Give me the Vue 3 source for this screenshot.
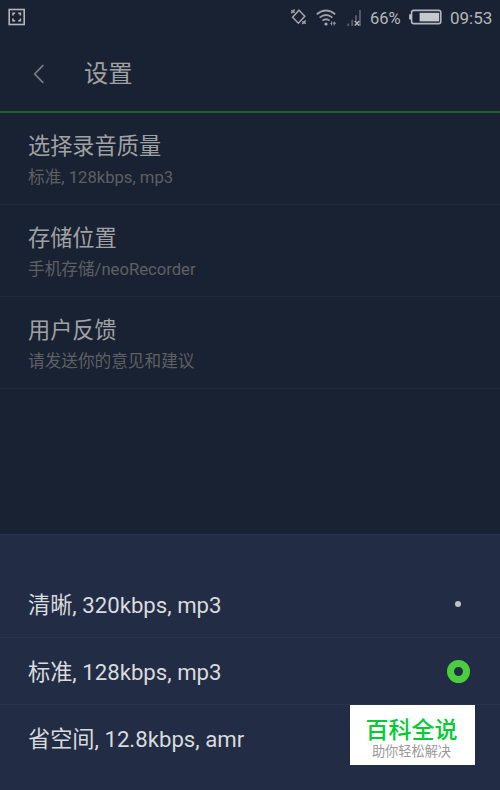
<template>
  <div class="screen">
    <div class="status-bar">
      <svg class="shot-icon" width="18" height="18" viewBox="0 0 18 18">
        <rect x="1.2" y="1.5" width="15" height="15" />
        <path d="M5 7.5V5.3h2.2M10.2 5.3h2.2v2.2M12.4 10.5v2.2h-2.2M7.2 12.7H5v-2.2" />
      </svg>

      <div class="status-right">
        <svg class="rotate-icon" width="17" height="18" viewBox="0 0 17 18">
          <path d="M9 2.2L14.8 8.2L8.4 15.2L2.6 9.2Z" />
          <path d="M1.2 5.2L4.7 1.5M1.2 2.4L4.7 4.6M12.2 16L15.7 12.4M12.4 13.4L15.7 15.6" />
        </svg>
        <svg class="wifi-icon" width="21" height="18" viewBox="0 0 21 18">
          <path d="M.8 5.2Q10 -2.2 19.2 5.2M3.6 8.6Q10 3.4 16.4 8.6M6.4 11.6Q10 8.8 13.6 11.6" />
          <circle cx="10" cy="15" r="1.6" />
          <path class="thin" d="M15.7 12.4v4M14.3 14.4h1.4M18.2 12.6v3.8M16.9 14.2h3" />
        </svg>
        <svg class="signal-icon" width="15" height="18" viewBox="0 0 15 18">
          <path class="dim" d="M1.2 14.6v2.4M5.2 10.8v6.2M9 6.2v5.6M13 1v16" />
          <path d="M7.8 12l4.4 4.6M12.2 12L7.8 16.6" />
        </svg>
        <span class="percent">66%</span>
        <svg class="battery-icon" width="34" height="16" viewBox="0 0 34 16">
          <rect class="shell" x="2.6" y="1.4" width="29.2" height="13.2" rx="2.2" />
          <rect class="fill" x="10.6" y="3.8" width="19.6" height="8.6" />
          <rect class="fill" x="0.2" y="5.3" width="1.8" height="5.2" />
        </svg>
        <span class="clock">09:53</span>
      </div>
    </div>

    <div class="header">
      <svg class="back-icon" width="12" height="20" viewBox="0 0 12 20">
        <path d="M10.3 1.2L1.7 10L10.3 18.8" />
      </svg>
      <h1>设置</h1>
    </div>

    <ul class="settings">
      <li v-for="item in settings" :key="item.title">
        <div class="title">{{ item.title }}</div>
        <div class="desc">{{ item.desc }}</div>
      </li>
    </ul>

    <div class="sheet">
      <div
        v-for="(option, index) in options"
        :key="option"
        class="option"
        @click="selected = index"
      >
        <span>{{ option }}</span>
        <i class="radio" :class="{ active: selected === index }"></i>
      </div>
    </div>

    <div class="badge">
      <strong>百科全说</strong>
      <span>助你轻松解决</span>
    </div>
  </div>
</template>

<script setup>
import { ref } from 'vue'

const settings = [
  { title: '选择录音质量', desc: '标准, 128kbps, mp3' },
  { title: '存储位置', desc: '手机存储/neoRecorder' },
  { title: '用户反馈', desc: '请发送你的意见和建议' }
]

const options = ['清晰, 320kbps, mp3', '标准, 128kbps, mp3', '省空间, 12.8kbps, amr']
const selected = ref(1)
</script>

<style>
body {
  background: #192232;
}
</style>

<style scoped>
.screen {
  position: relative;
  display: flex;
  flex-direction: column;
  width: 500px;
  height: 790px;
  overflow: hidden;
  background: #192232;
  font-family: Roboto, "Noto Sans CJK SC", sans-serif;
}

svg {
  display: block;
  fill: none;
  flex-shrink: 0;
}

/* status bar */
.status-bar {
  display: flex;
  justify-content: space-between;
  height: 36px;
  padding: 0 8px;
  color: #b3b7bd;
}

.shot-icon {
  margin-top: 8px;
  stroke: #b3b7bd;
  stroke-width: 1.6;
}

.status-right {
  display: flex;
  align-items: center;
  font-size: 17px;
  line-height: 37px;
}

.rotate-icon {
  margin: -2px 9px 0 0;
  stroke: #a0a5ad;
  stroke-width: 1.5;
}

.wifi-icon {
  margin: -1px 10px 0 0;
  stroke: #9ca1aa;
  stroke-width: 1.8;
}

.wifi-icon circle {
  fill: #a8acb4;
  stroke: none;
}

.wifi-icon .thin {
  stroke-width: 1;
}

.signal-icon {
  margin: -1px 8px 0 0;
  stroke: #b3b7bd;
  stroke-width: 1.5;
}

.signal-icon .dim {
  stroke: #59606c;
  stroke-width: 1.8;
}

.percent {
  width: 31px;
  font-size: 16.5px;
}

.battery-icon {
  width: 34px;
  margin: -2px 7px 0 8px;
}

.clock {
  width: 42px;
}

.shell {
  stroke: #b3b7bd;
  stroke-width: 1.6;
}

.fill {
  fill: #c6c9cd;
}

/* header */
.header {
  display: flex;
  align-items: center;
  height: 75px;
  padding-left: 33px;
  border-bottom: 2px solid #24602f;
}

.back-icon {
  stroke: #797d84;
  stroke-width: 1.7;
}

h1 {
  margin: 0 0 4px 39px;
  font-size: 24.3px;
  font-weight: 400;
  color: #a0a1a4;
}

/* settings */
.settings {
  margin: 0;
  padding: 0;
  list-style: none;
}

.settings li {
  box-sizing: border-box;
  height: 92px;
  padding: 16px 28px 0;
  border-bottom: 1px solid #202a39;
}

.title {
  height: 34px;
  line-height: 34px;
  font-size: 22.2px;
  color: #a0a1a4;
}

.desc {
  height: 26px;
  line-height: 29px;
  font-size: 16.65px;
  color: #5e6063;
}

/* bottom sheet */
.sheet {
  height: 219px;
  margin-top: auto;
  padding-top: 36px;
  border-top: 1px solid #263449;
  background: #222d45;
}

.option {
  box-sizing: border-box;
  display: flex;
  align-items: center;
  justify-content: space-between;
  height: 67px;
  padding: 0 30px 0 28px;
  border-bottom: 1px solid #28344a;
  font-size: 22.2px;
  color: #d9dbdd;
  cursor: pointer;
}

.option span {
  padding-bottom: 3px;
}

.option:last-child {
  border-bottom: none;
}

.radio {
  box-sizing: border-box;
  width: 6px;
  height: 6px;
  margin-right: 9px;
  border-radius: 50%;
  background: #bfc3c7;
}

.radio.active {
  width: 23px;
  height: 23px;
  margin-right: 0;
  border: 7.5px solid #4ccd3f;
  background: none;
}

/* corner badge */
.badge {
  position: absolute;
  right: 25px;
  bottom: 25px;
  box-sizing: border-box;
  display: flex;
  flex-direction: column;
  align-items: center;
  width: 125px;
  height: 60px;
  padding-right: 2px;
  background: #fff;
}

.badge strong {
  height: 33px;
  margin-top: 9px;
  line-height: 33px;
  font-size: 23px;
  font-weight: 500;
  color: #0c3;
}

.badge span {
  line-height: 10px;
  font-size: 13.2px;
  color: #999;
}
</style>
